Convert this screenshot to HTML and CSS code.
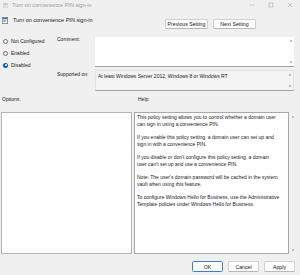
FILE: index.html
```html
<!DOCTYPE html>
<html lang="en">

<head>
    <meta charset="UTF-8">
    <title>Turn on convenience PIN sign-in</title>
    <link rel="stylesheet" href="styles.css">
</head>

<body>
    <div class="dialog">
        <div class="titlebar">
            <svg class="app-icon faded" viewBox="0 0 5 5">
                <rect x="0.25" y="0.25" width="4.5" height="4.5" fill="#fff" stroke="#8a8fa0" stroke-width="0.5" />
                <rect x="0.5" y="0.5" width="4" height="1.2" fill="#4a7fd0" />
                <rect x="1" y="2.4" width="2.6" height="0.5" fill="#7ab05a" />
                <rect x="1" y="3.4" width="1.8" height="0.5" fill="#c45" />
            </svg>
            <span class="title">Turn on convenience PIN sign-in</span>
            <div class="window-controls">
                <svg class="ctl" viewBox="0 0 6 6"><line x1="0.5" y1="3" x2="5.5" y2="3" /></svg>
                <svg class="ctl" viewBox="0 0 6 6"><rect x="1" y="1" width="4" height="4" /></svg>
                <svg class="ctl" viewBox="0 0 6 6"><path d="M1,1 L5,5 M5,1 L1,5" /></svg>
            </div>
        </div>

        <div class="header">
            <svg class="policy-icon" viewBox="0 0 6 7">
                <rect x="0.3" y="0.3" width="5.4" height="6.4" fill="#eef2f7" stroke="#5b6274" stroke-width="0.6" />
                <rect x="0.6" y="0.6" width="4.8" height="1.6" fill="#3b73c8" />
                <rect x="1.3" y="3" width="3.2" height="0.6" fill="#5a9a3c" />
                <rect x="1.3" y="4.4" width="2.2" height="0.6" fill="#c03a4a" />
            </svg>
            <span class="policy-name">Turn on convenience PIN sign-in</span>
            <div class="nav">
                <button class="btn">Previous Setting</button>
                <button class="btn">Next Setting</button>
            </div>
        </div>

        <div class="settings">
            <div class="state">
                <label class="radio"><span class="dot"></span>Not Configured</label>
                <label class="radio"><span class="dot"></span>Enabled</label>
                <label class="radio"><span class="dot checked"></span>Disabled</label>
            </div>
            <div class="fields">
                <div class="field-row">
                    <span class="field-label">Comment:</span>
                    <div class="textbox comment">
                        <div class="box-text"></div>
                        <div class="arrows">
                            <svg class="arrow" viewBox="0 0 4 3"><polygon points="0.5,2.5 2,0.8 3.5,2.5" /></svg>
                            <svg class="arrow" viewBox="0 0 4 3"><polygon points="0.5,0.5 2,2.2 3.5,0.5" /></svg>
                        </div>
                    </div>
                </div>
                <div class="field-row">
                    <span class="field-label supported-label">Supported on:</span>
                    <div class="textbox supported">
                        <div class="box-text">At least Windows Server 2012, Windows 8 or Windows RT</div>
                        <div class="arrows">
                            <svg class="arrow" viewBox="0 0 4 3"><polygon points="0.5,2.5 2,0.8 3.5,2.5" /></svg>
                            <svg class="arrow" viewBox="0 0 4 3"><polygon points="0.5,0.5 2,2.2 3.5,0.5" /></svg>
                        </div>
                    </div>
                </div>
            </div>
        </div>

        <div class="section-labels">
            <span class="options-label">Options:</span>
            <span>Help:</span>
        </div>

        <div class="panes">
            <div class="options-pane"></div>
            <div class="help-pane">
                This policy setting allows you to control whether a domain user<br>
                can sign in using a convenience PIN.<br>
                <br>
                If you enable this policy setting, a domain user can set up and<br>
                sign in with a convenience PIN.<br>
                <br>
                If you disable or don't configure this policy setting, a domain<br>
                user can't set up and use a convenience PIN.<br>
                <br>
                Note: The user's domain password will be cached in the system<br>
                vault when using this feature.<br>
                <br>
                To configure Windows Hello for Business, use the Administrative<br>
                Template policies under Windows Hello for Business.
            </div>
            <div class="help-scroll">
                <svg class="arrow" viewBox="0 0 4 3"><polygon points="0.5,2.5 2,0.8 3.5,2.5" /></svg>
                <svg class="arrow" viewBox="0 0 4 3"><polygon points="0.5,0.5 2,2.2 3.5,0.5" /></svg>
            </div>
        </div>

        <div class="footer">
            <button class="btn default">OK</button>
            <button class="btn">Cancel</button>
            <button class="btn">Apply</button>
        </div>
    </div>
</body>

</html>
```

FILE: styles.css
```css
body {
    margin: 0;
    overflow: hidden;
    background: #f0f0f0;
    font-family: "Liberation Sans", Arial, sans-serif;
    font-size: 5px;
    color: #1a1a1a;
}

.dialog {
    width: 300px;
    height: 275px;
}

/* Title bar */
.titlebar {
    height: 10px;
    display: flex;
    align-items: center;
}

.app-icon {
    width: 5px;
    height: 5px;
    margin-left: 3px;
}

.faded {
    opacity: 0.45;
}

.title {
    margin-left: 4px;
    color: #9a9a9a;
    font-size: 5.5px;
}

.window-controls {
    margin-left: auto;
    display: flex;
    align-items: center;
}

.ctl {
    width: 6px;
    height: 6px;
    margin-right: 13px;
    fill: none;
    stroke: #a8a8a8;
    stroke-width: 0.6;
}

.ctl:last-child {
    margin-right: 7px;
}

/* Policy header */
.header {
    height: 23px;
    display: flex;
    align-items: flex-start;
    padding-top: 7px;
    box-sizing: border-box;
}

.policy-icon {
    width: 6px;
    height: 7px;
    margin-left: 2px;
}

.policy-name {
    margin-left: 5px;
    line-height: 7px;
    font-size: 5.5px;
}

.nav {
    margin-left: auto;
    margin-right: 44px;
    margin-top: 2px;
    display: flex;
    gap: 5px;
}

.btn {
    font-family: inherit;
    font-size: 5.2px;
    color: #1a1a1a;
    width: 43px;
    height: 10px;
    padding: 0;
    background: #fdfdfd;
    border: 0.6px solid #d0d0d0;
    border-bottom-color: #b8b8b8;
    border-radius: 1.5px;
}

/* State and fields */
.settings {
    display: flex;
}

.state {
    width: 57px;
    padding-top: 2px;
}

.radio {
    display: flex;
    align-items: center;
    height: 12px;
    padding-left: 3px;
}

.dot {
    width: 5px;
    height: 5px;
    border: 0.6px solid #707070;
    border-radius: 50%;
    margin-right: 3px;
    box-sizing: border-box;
    background: #f8f8f8;
    display: flex;
    align-items: center;
    justify-content: center;
}

.dot.checked {
    border: none;
    background: #005fb8;
}

.dot.checked::after {
    content: '';
    width: 2px;
    height: 2px;
    border-radius: 50%;
    background: #fff;
}

.fields {
    padding-top: 4px;
    display: flex;
    flex-direction: column;
    gap: 3px;
}

.field-row {
    display: flex;
}

.field-label {
    width: 38px;
    line-height: 5px;
}

.supported-label {
    padding-top: 2px;
}

.textbox {
    width: 199px;
    display: flex;
    box-sizing: border-box;
    border-bottom: 0.8px solid #a0a0a0;
}

.comment {
    height: 30px;
    background: #fff;
}

.supported {
    height: 21px;
    background: #f4f4f4;
    border: 0.5px solid #e2e2e2;
    border-bottom: 0.8px solid #a0a0a0;
}

.box-text {
    flex: 1;
    padding: 2px 2px;
    line-height: 6px;
}

.arrows {
    width: 6px;
    display: flex;
    flex-direction: column;
    justify-content: space-between;
    align-items: center;
    padding: 2px 0;
}

.arrow {
    width: 4px;
    height: 3px;
    fill: #9c9c9c;
}

/* Options / help */
.section-labels {
    display: flex;
    margin-top: 5px;
    line-height: 6px;
}

.options-label {
    width: 136px;
    padding-left: 2px;
}

.panes {
    display: flex;
    margin-top: 10px;
    height: 142px;
}

.options-pane {
    width: 131px;
    margin-left: 1px;
    background: #fff;
    border: 0.8px solid #b4b4b4;
    border-left-width: 1px;
    box-sizing: border-box;
}

.help-pane {
    width: 155px;
    margin-left: 2px;
    background: #fff;
    border: 0.8px solid #a8a8a8;
    box-sizing: border-box;
    padding: 1px 2px;
    line-height: 6.7px;
    white-space: nowrap;
    overflow: hidden;
}

.help-scroll {
    width: 8px;
    display: flex;
    flex-direction: column;
    justify-content: space-between;
    align-items: center;
    padding: 3px 0 2px;
}

/* Footer */
.footer {
    display: flex;
    justify-content: flex-end;
    gap: 5px;
    margin-top: 7px;
    padding-right: 5px;
}

.footer .btn {
    width: 31px;
    height: 11px;
}

.btn.default {
    border: 0.8px solid #3c7fd0;
}
```
